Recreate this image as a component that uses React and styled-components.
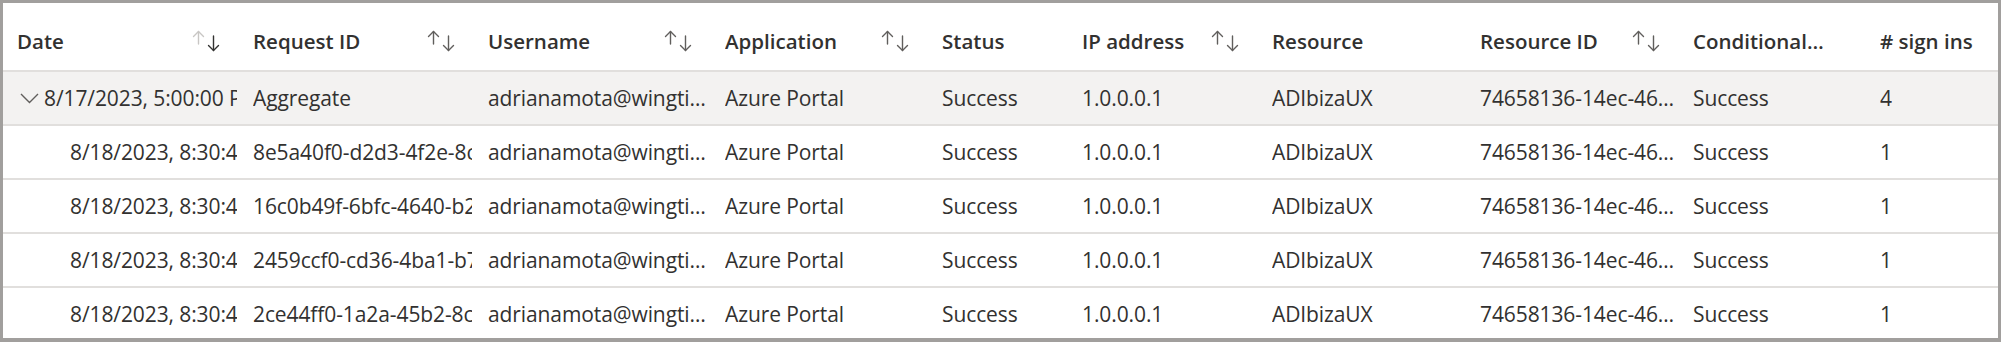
import React from 'react';
import styled, { createGlobalStyle } from 'styled-components';

const GlobalStyle = createGlobalStyle`
  html, body {
    margin: 0;
    padding: 0;
    background: #ffffff;
  }
  body {
    font-family: "Open Sans", "Noto Sans", sans-serif;
    color: #323130;
  }
`;

const COLUMNS = '236px 235px 237px 217px 140px 190px 208px 213px 187px 1fr';

const Frame = styled.div`
  box-sizing: border-box;
  width: 2001px;
  height: 342px;
  border: 3px solid #a19f9d;
  border-bottom-width: 4px;
  overflow: hidden;
  background: #ffffff;
`;

const Row = styled.div`
  display: grid;
  grid-template-columns: ${COLUMNS};
  box-sizing: border-box;
  height: ${(p) => (p.$header ? '69px' : '54px')};
  padding-top: ${(p) => (p.$header ? '8px' : '0')};
  border-bottom: 2px solid #e1dfdd;
  background: ${(p) => (p.$group ? '#f3f2f1' : '#ffffff')};
`;

const HeadCell = styled.div`
  display: flex;
  align-items: center;
  justify-content: space-between;
  padding: 0 ${(p) => p.$right}px 0 14px;
  min-width: 0;
  font-size: 20.5px;
  font-weight: 600;
  white-space: nowrap;
`;

const HeadLabel = styled.span`
  overflow: hidden;
  text-overflow: ellipsis;
`;

const Cell = styled.div`
  display: flex;
  align-items: center;
  padding: 0 2px 0 ${(p) => p.$indent || 14}px;
  min-width: 0;
  font-size: 21px;
  letter-spacing: -0.1px;
  white-space: nowrap;
  overflow: hidden;
`;

const CellText = styled.span`
  overflow: hidden;
  text-overflow: ${(p) => (p.$clip ? 'clip' : 'ellipsis')};
`;

const Chevron = styled.svg`
  flex: none;
  margin-right: 5px;
`;

function SortIcon({ active }) {
  return (
    <svg width="30" height="22" viewBox="0 0 30 22" fill="none">
      <g stroke={active ? '#c8c6c4' : '#605e5c'} strokeWidth="1.4" strokeLinecap="round" strokeLinejoin="round">
        <path d="M6.5 1.5 V14" />
        <path d="M1.5 6.5 L6.5 1.5 L11.5 6.5" />
      </g>
      <g stroke={active ? '#323130' : '#605e5c'} strokeWidth="1.4" strokeLinecap="round" strokeLinejoin="round">
        <path d="M21.5 6 V20.5" />
        <path d="M16.5 15.5 L21.5 20.5 L26.5 15.5" />
      </g>
    </svg>
  );
}

const headers = [
  { label: 'Date', sort: true, active: true },
  { label: 'Request ID', sort: true },
  { label: 'Username', sort: true },
  { label: 'Application', sort: true },
  { label: 'Status' },
  { label: 'IP address', sort: true },
  { label: 'Resource' },
  { label: 'Resource ID', sort: true },
  { label: 'Conditional Access', right: 39 },
  { label: '# sign ins' },
];

const children = [
  { id: '8e5a40f0-d2d3-4f2e-8c1a-7f3b' },
  { id: '16c0b49f-6bfc-4640-b2e1-09a4' },
  { id: '2459ccf0-cd36-4ba1-b7d3-11c2' },
  { id: '2ce44ff0-1a2a-45b2-8c90-aa17' },
];

function DataRow({ group, date, id, count }) {
  return (
    <Row $group={group}>
      <Cell $indent={group ? 17 : 67}>
        {group && (
          <Chevron width="19" height="11" viewBox="0 0 19 11" fill="none">
            <path d="M1 1 L9.5 9.5 L18 1" stroke="#605e5c" strokeWidth="1.4" />
          </Chevron>
        )}
        <CellText $clip>{date}</CellText>
      </Cell>
      <Cell>
        <CellText $clip>{id}</CellText>
      </Cell>
      <Cell>
        <CellText>adrianamota@wingtiptoys.com</CellText>
      </Cell>
      <Cell>
        <CellText>Azure Portal</CellText>
      </Cell>
      <Cell>
        <CellText>Success</CellText>
      </Cell>
      <Cell>
        <CellText>1.0.0.0.1</CellText>
      </Cell>
      <Cell>
        <CellText>ADIbizaUX</CellText>
      </Cell>
      <Cell>
        <CellText>74658136-14ec-4630-ad9b-26e1</CellText>
      </Cell>
      <Cell>
        <CellText>Success</CellText>
      </Cell>
      <Cell>
        <CellText>{count}</CellText>
      </Cell>
    </Row>
  );
}

export default function App() {
  return (
    <>
      <GlobalStyle />
      <Frame>
        <Row $header>
          {headers.map((h) => (
            <HeadCell key={h.label} $right={h.right || 17}>
              <HeadLabel>{h.label}</HeadLabel>
              {h.sort && <SortIcon active={h.active} />}
            </HeadCell>
          ))}
        </Row>
        <DataRow group date="8/17/2023, 5:00:00 PM" id="Aggregate" count="4" />
        {children.map((c) => (
          <DataRow key={c.id} date="8/18/2023, 8:30:45 AM" id={c.id} count="1" />
        ))}
      </Frame>
    </>
  );
}
